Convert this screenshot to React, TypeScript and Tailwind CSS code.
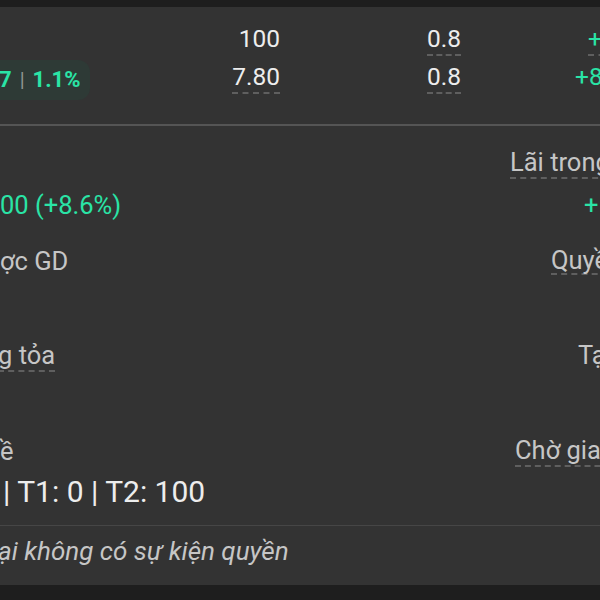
import React from 'react';

const green = 'text-[#2ae4a6]';

const Dashed = ({ children, className = '' }: { children: React.ReactNode; className?: string }) => (
  <span className={`inline-block border-b-2 border-dashed border-[#5f5f5f] leading-[30px] ${className}`}>{children}</span>
);

const App = () => {
  return (
    <div className="w-[600px] h-[600px] overflow-hidden bg-[#1e1e1e] font-['Roboto','Noto_Sans',sans-serif]">
      <div className="h-[7px]" />
      <div className="h-[578px] bg-[#333333] overflow-hidden">
        {/* bảng giá */}
        <div className="pt-[16px]">
          <div className="flex h-[32px] items-start text-[24.5px] leading-[32px] whitespace-nowrap">
            <div className="w-[90px] shrink-0" />
            <div className="w-[190px] shrink-0 text-right text-[#ededed]">100</div>
            <div className="w-[181px] shrink-0 text-right">
              <Dashed className="text-[#ededed]">0.8</Dashed>
            </div>
            <div className="pl-[127px]">
              <Dashed className={green}>+0.0</Dashed>
            </div>
          </div>
          <div className="flex h-[40px] mt-[5px] items-start text-[24.5px] leading-[32px] whitespace-nowrap">
            <div className="w-[90px] h-[40px] shrink-0 flex items-center bg-[#2e3a36] rounded-r-xl text-[22px] font-bold">
              <span className={`${green} -ml-[1px]`}>7</span>
              <span className="mx-[8px] text-[20px] font-normal text-[#8f9692]">|</span>
              <span className={green}>1.1%</span>
            </div>
            <div className="w-[190px] shrink-0 text-right pt-[1px]">
              <Dashed className="text-[#ededed]">7.80</Dashed>
            </div>
            <div className="w-[181px] shrink-0 text-right pt-[1px]">
              <Dashed className="text-[#ededed]">0.8</Dashed>
            </div>
            <div className="pl-[114px] pt-[1px]">
              <span className={green}>+8.20</span>
            </div>
          </div>
        </div>

        <div className="mt-[24px] h-[2px] bg-[#555555]" />

        {/* thông tin vị thế */}
        <div className="mt-[21px] flex flex-col gap-6 text-[25.5px] leading-[32px] whitespace-nowrap">
          <div className="flex flex-col gap-2">
            <div className="flex h-8">
              <div className="w-[510px] shrink-0" />
              <Dashed className="text-[#c6c6c6]">Lãi trong ngày</Dashed>
            </div>
            <div className="flex h-8 pt-[2px]">
              <div className="w-[584px] shrink-0">
                <span className={green}>00 (+8.6%)</span>
              </div>
              <span className={green}>+</span>
            </div>
          </div>

          <div className="flex flex-col gap-2">
            <div className="flex h-8 pt-[2px]">
              <div className="w-[551px] shrink-0 text-[#c6c6c6]">ợc GD</div>
              <Dashed className="text-[#c6c6c6]">Quyền mua</Dashed>
            </div>
            <div className="h-8" />
          </div>

          <div className="flex flex-col gap-2">
            <div className="flex h-8">
              <div className="w-[578px] shrink-0">
                <Dashed className="text-[#c6c6c6] -ml-[2px]">g tỏa</Dashed>
              </div>
              <span className="text-[#c6c6c6]">Tạm giữ</span>
            </div>
            <div className="h-8" />
          </div>

          <div className="flex flex-col gap-2">
            <div className="flex h-8">
              <div className="w-[515px] shrink-0 text-[#c6c6c6]">ề</div>
              <Dashed className="text-[#c6c6c6]">Chờ giao dịch</Dashed>
            </div>
            <div className="h-[34px] text-[30px] leading-[34px] text-[#ededed]">
              <span className="pl-[3px]">| T1: 0 | T2: 100</span>
            </div>
          </div>
        </div>

        <div className="mt-[16px] h-px bg-[#464646]" />

        <div className="pt-[9px] text-[26px] leading-[32px] italic text-[#c6c6c6] whitespace-nowrap">
          <span className="-ml-[2px] inline-block">ại không có sự kiện quyền</span>
        </div>
      </div>
    </div>
  );
};

export default App;
